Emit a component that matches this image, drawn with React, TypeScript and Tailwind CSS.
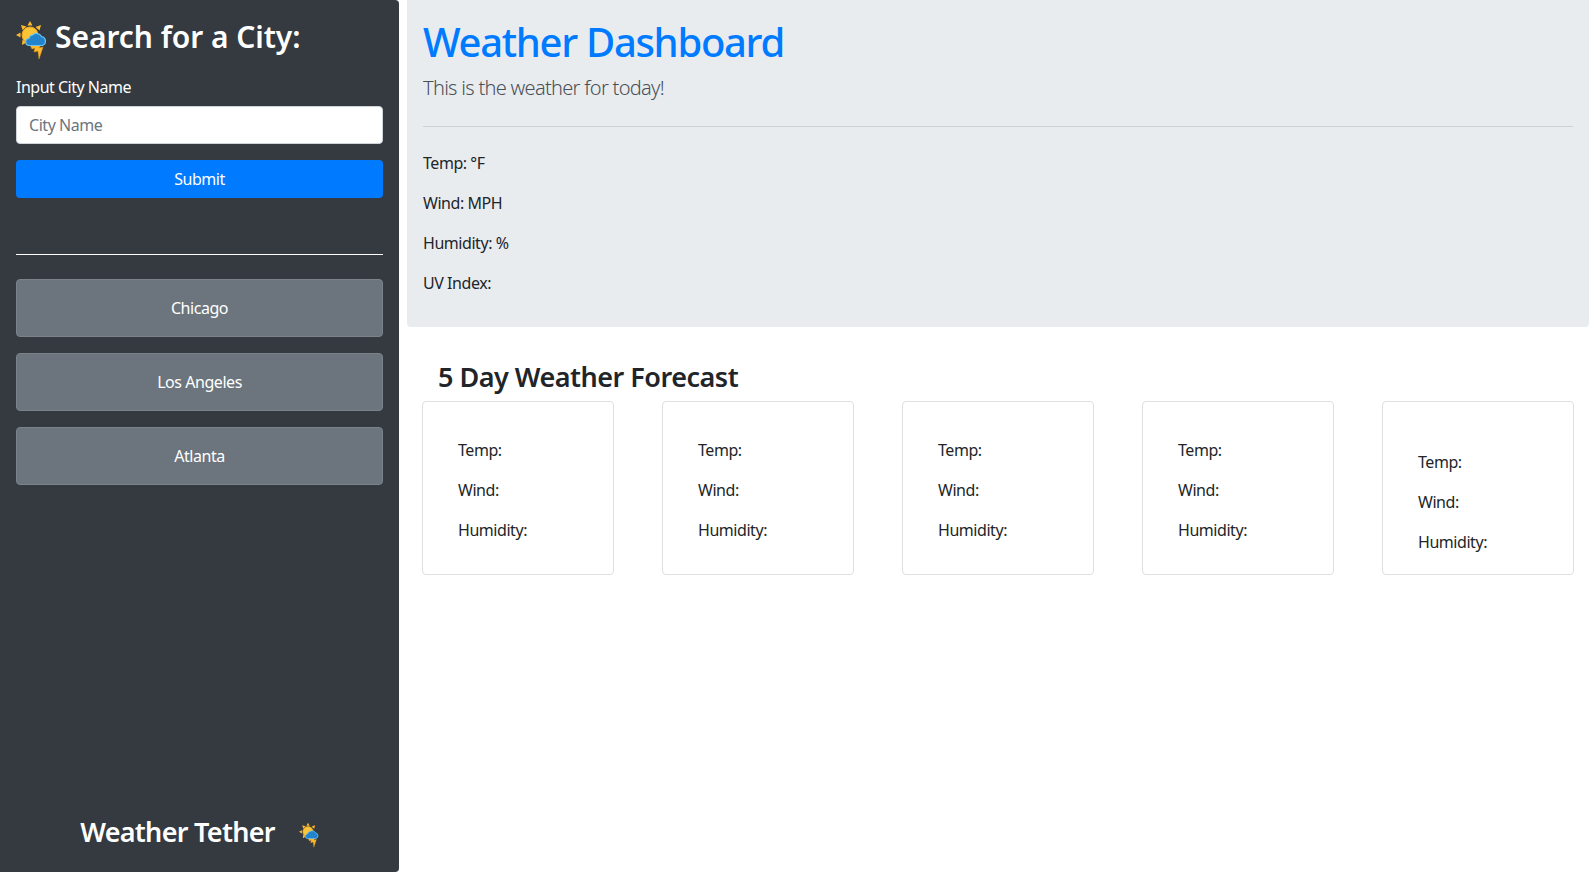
const cities = ["Chicago", "Los Angeles", "Atlanta"];

const todayStats = ["Temp: °F", "Wind: MPH", "Humidity: %", "UV Index:"];

function WeatherIcon({ className }: { className: string }) {
  return (
    <svg aria-hidden="true" className={className} viewBox="0 0 31 40">
      {/* sun rays */}
      <path
        d="M14 1l2.500 4.500h-5zM5 5l5.500 1.500-4 3.500zM25 5l-1.500 5.500-4-3.500zM0 15l4.500-2.500v5zM6 25l.5-5.500 4 3z"
        fill="#fdb92e"
      />
      {/* sun */}
      <circle cx="14" cy="15" r="8" fill="#fcc537" stroke="#f2a51f" strokeWidth="1" />
      {/* lightning bolt */}
      <path d="M14 25h11l-2 3 4-1-4 12-1-8-4 1 1-4-3 1z" fill="#fdb92e" stroke="#e79a17" strokeWidth="0.500" />
      {/* cloud */}
      <path
        d="M13.500 25.500a3.500 3.500 0 0 1-.5-7a4 4 0 0 1 3.500-3.500a5.800 5.800 0 0 1 9 1.500a4.700 4.700 0 0 1 1 9z"
        fill="#2383cb"
        stroke="#6cc4f0"
        strokeWidth="1.200"
      />
    </svg>
  );
}

function ForecastCard({ shifted }: { shifted?: boolean }) {
  return (
    <div
      className={`flex h-[174px] w-[192px] flex-col justify-center gap-[16px] rounded-[4px] border border-[#dfdfdf] bg-white pl-[35px] text-[16px] leading-[24px] text-[#212529] ${
        shifted ? "pt-[28px]" : "pt-[4px]"
      }`}
    >
      <p>Temp:</p>
      <p>Wind:</p>
      <p>Humidity:</p>
    </div>
  );
}

export default function App() {
  return (
    <div className="flex h-[872px] overflow-hidden bg-white pr-[7px] font-['Noto_Sans',sans-serif] tracking-[-0.45px] text-[#212529]">
      <aside className="flex w-[399px] shrink-0 flex-col rounded-r-[4px] bg-[#343a40] px-[16px] text-white">
        <div className="mt-[20px] flex h-[40px] items-start gap-[8px]">
          <WeatherIcon className="h-[40px] w-[31px]" />
          <h3 className="text-[30px] leading-[34px] font-semibold tracking-[-0.05px]">Search for a City:</h3>
        </div>
        <label className="mt-[15px] text-[16px] leading-[24px] tracking-[-0.5px]">Input City Name</label>
        <input
          placeholder="City Name"
          className="mt-[7px] h-[38px] rounded-[4px] border border-[#ced4da] bg-white px-[12px] text-[16px] text-[#495057] placeholder:text-[#6c757d]"
        />
        <button className="mt-[16px] h-[38px] rounded-[4px] bg-[#007bff] text-[16px]">Submit</button>
        <hr className="mt-[56px] border-t border-white" />
        <div className="mt-[24px] flex flex-col gap-[16px]">
          {cities.map((city) => (
            <button
              key={city}
              className="h-[58px] rounded-[4px] border border-[#7a828a] bg-[#6c757d] text-[16px]"
            >
              {city}
            </button>
          ))}
        </div>
        <div className="mt-auto mb-[20px] flex items-center justify-center gap-[24px]">
          <h3 className="text-[27px] leading-[40px] font-semibold tracking-[-0.7px]">Weather Tether</h3>
          <WeatherIcon className="mt-[5px] h-[26px] w-[20px]" />
        </div>
      </aside>

      <main className="ml-[8px] flex min-w-0 flex-1 flex-col">
        <section className="h-[327px] rounded-b-[4px] bg-[#e9ecef] px-[16px] pt-[18px]">
          <h1 className="text-[40px] leading-[48px] font-medium tracking-[-1.3px] text-[#007bff]">
            Weather Dashboard
          </h1>
          <p className="mt-[7px] text-[20px] leading-[30px] font-light tracking-[-0.7px] text-[#495057]">
            This is the weather for today!
          </p>
          <hr className="mt-[23px] mb-[24px] border-t border-[#cfd2d5]" />
          <div className="flex flex-col gap-[16px] text-[16px] leading-[24px]">
            {todayStats.map((stat) => (
              <p key={stat}>{stat}</p>
            ))}
          </div>
        </section>

        <h3 className="mt-[30px] pl-[31px] text-[27px] leading-[40px] font-semibold tracking-[-0.5px]">
          5 Day Weather Forecast
        </h3>
        <div className="mt-[4px] flex justify-between px-[15px]">
          <ForecastCard />
          <ForecastCard />
          <ForecastCard />
          <ForecastCard />
          <ForecastCard shifted />
        </div>
      </main>
    </div>
  );
}
